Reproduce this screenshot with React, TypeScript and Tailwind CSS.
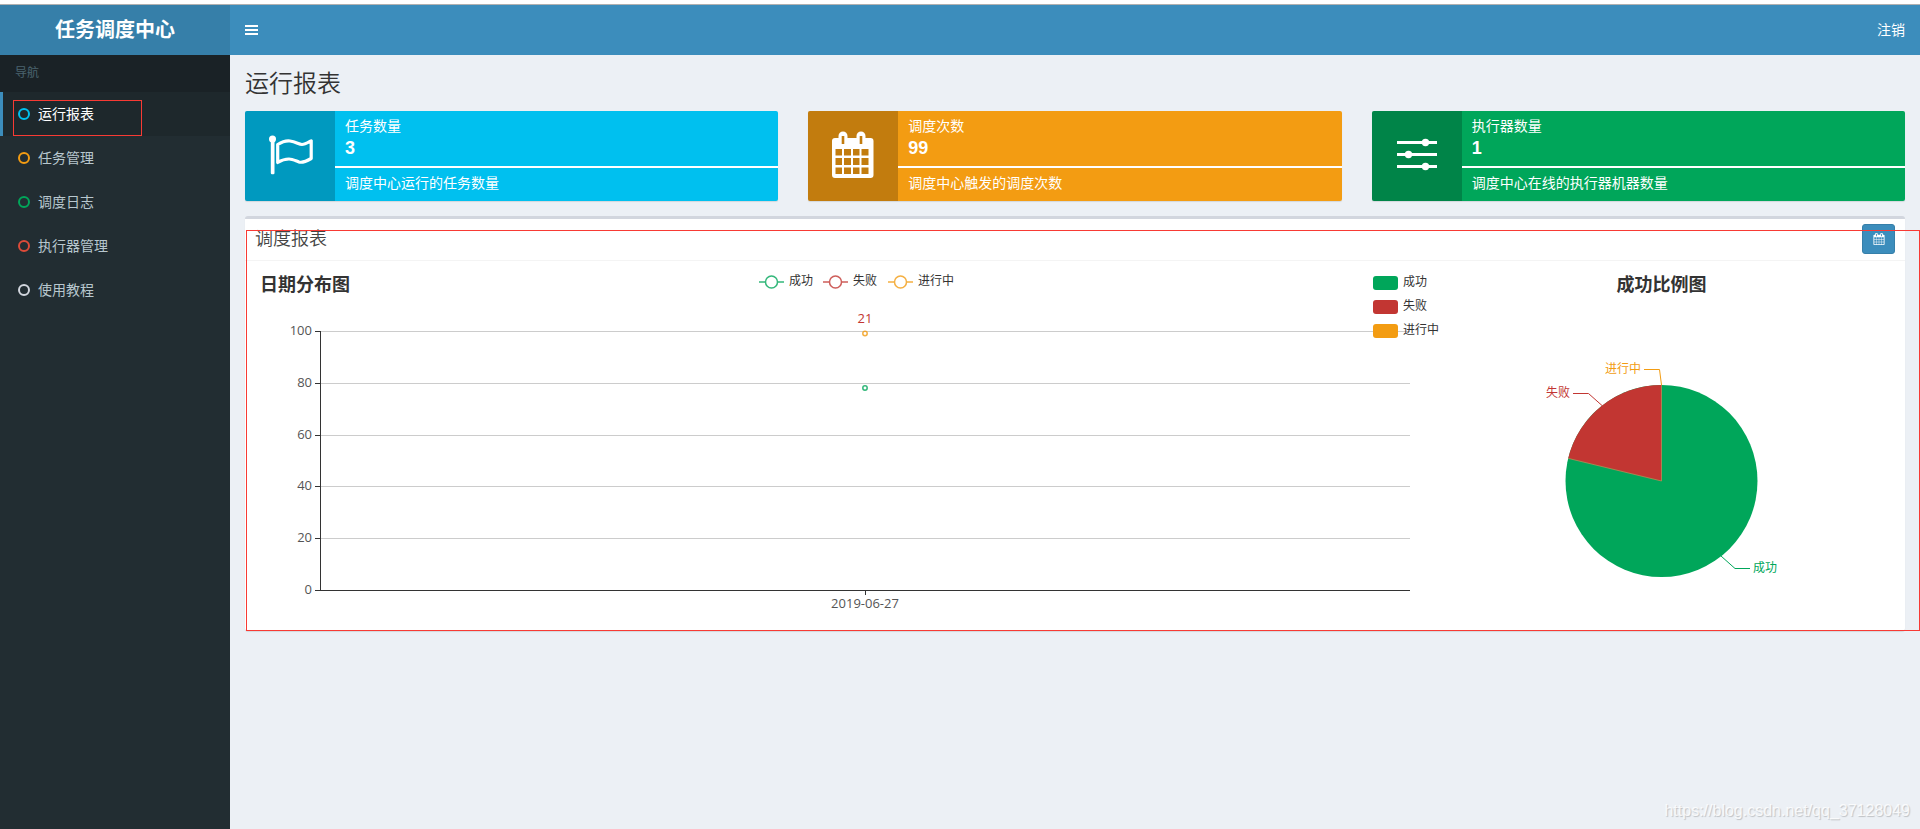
import clsx from 'clsx';
import type { ReactNode } from 'react';

const GREEN = '#00a65a';
const RED = '#c23632';
const ORANGE = '#f39c12';

const navItems = [
  { label: '运行报表', iconClass: 'border-[#00c0ef]', active: true },
  { label: '任务管理', iconClass: 'border-[#f39c12]' },
  { label: '调度日志', iconClass: 'border-[#00a65a]' },
  { label: '执行器管理', iconClass: 'border-[#dd4b39]' },
  { label: '使用教程', iconClass: 'border-[#d2d6de]' }
];

const series = [
  { name: '成功', color: GREEN },
  { name: '失败', color: RED },
  { name: '进行中', color: ORANGE }
];

function FlagIcon() {
  return (
    <svg viewBox="0 0 90 90" fill="none" className="size-[90px]">
      <circle cx="27.500" cy="28" r="3.500" fill="currentColor" />
      <path d="M25.800 28h3.700v34q0 1.200-1.200 1.200h-1.300q-1.200 0-1.200-1.200z" fill="currentColor" />
      <path
        d="M32.700 33.500C37 30.800 41 29.500 45 30C51 30.800 54 33.500 57 33.500C60 33.500 63 31.500 66.200 29.800V47.500C61 50.500 57 52 54 51C50 49.500 47 48 44 48C40 48 36 49.500 32.700 51.500Z"
        stroke="currentColor"
        strokeWidth="3.200"
        strokeLinejoin="round"
      />
    </svg>
  );
}

function CalendarIcon({ className }: { className: string }) {
  return (
    <svg viewBox="0 0 1792 1792" fill="currentColor" className={className}>
      <path d="M192 1664h288v-288h-288v288zm352 0h320v-288h-320v288zm-352-352h288v-320h-288v320zm352 0h320v-320h-320v320zm-352-384h288v-288h-288v288zm736 736h320v-288h-320v288zm-384-736h320v-288h-320v288zm768 736h288v-288h-288v288zm-384-352h320v-320h-320v320zm-352-864v-288q0-13-9.5-22.5t-22.5-9.5h-64q-13 0-22.5 9.5t-9.5 22.5v288q0 13 9.5 22.5t22.5 9.5h64q13 0 22.5-9.5t9.5-22.5zm736 864h288v-320h-288v320zm-384-384h320v-288h-320v288zm384 0h288v-288h-288v288zm32-480v-288q0-13-9.5-22.5t-22.5-9.5h-64q-13 0-22.5 9.5t-9.5 22.5v288q0 13 9.5 22.5t22.5 9.5h64q13 0 22.5-9.5t9.5-22.5zm384-64v1280q0 52-38 90t-90 38h-1408q-52 0-90-38t-38-90v-1280q0-52 38-90t90-38h128v-96q0-66 47-113t113-47h64q66 0 113 47t47 113v96h384v-96q0-66 47-113t113-47h64q66 0 113 47t47 113v96h128q52 0 90 38t38 90z" />
    </svg>
  );
}

// large calendar with a 4 x 3 day grid
function CalendarGridIcon() {
  return (
    <svg viewBox="0 0 90 90" fill="currentColor" className="size-[90px]">
      <path
        fillRule="evenodd"
        d="M27 27h3.500v-2a4.500 4.500 0 0 1 9 0v2h9v-2a4.500 4.500 0 0 1 9 0v2h5a3 3 0 0 1 3 3v34a3 3 0 0 1-3 3h-35.500a3 3 0 0 1-3-3v-34a3 3 0 0 1 3-3z
          M33.700 25h2.600v8h-2.600z M51.700 25h2.600v8h-2.600z
          M27.500 38h6.500v6.500h-6.500z M36 38h7v6.500h-7z M45 38h6.500v6.500h-6.500z M53.500 38h7v6.500h-7z
          M27.500 47h6.500v7h-6.500z M36 47h7v7h-7z M45 47h6.500v7h-6.500z M53.500 47h7v7h-7z
          M27.500 56.500h6.500v6.500h-6.500z M36 56.500h7v6.500h-7z M45 56.500h6.500v6.500h-6.500z M53.500 56.500h7v6.500h-7z"
      />
    </svg>
  );
}

function SettingsIcon() {
  return (
    <svg viewBox="0 0 90 90" fill="currentColor" className="size-[90px]">
      <path d="M25 30h40v3h-40zM25 42h40v3h-40zM25 54h40v3h-40z" />
      <circle cx="53.500" cy="31.500" r="3.700" />
      <circle cx="36.500" cy="43.500" r="3.700" />
      <circle cx="53.500" cy="55.500" r="3.700" />
    </svg>
  );
}

interface InfoBoxProps {
  title: string;
  value: number;
  description: string;
  bgClass: string;
  icon: ReactNode;
}

function InfoBox({ title, value, description, bgClass, icon }: InfoBoxProps) {
  return (
    <div
      className={clsx(
        'flex min-w-0 flex-1 overflow-hidden rounded-[2px] text-white shadow-[0_1px_1px_rgba(0,0,0,0.1)]',
        bgClass
      )}
    >
      <span className="flex h-[90px] w-[90px] shrink-0 items-center justify-center bg-black/20">
        {icon}
      </span>
      <div className="min-w-0 flex-1 pt-[5px]">
        <span className="block px-[10px] text-sm leading-5">{title}</span>
        <span className="block px-[10px] text-lg leading-[25px] font-bold">
          {value}
        </span>
        <div className="my-[5px] h-[2px] bg-white" />
        <span className="block px-[10px] text-sm leading-5">{description}</span>
      </div>
    </div>
  );
}

function LineChart() {
  const ticks = [100, 80, 60, 40, 20, 0];
  const legendX = [504, 568, 633];
  const yOf = (value: number) => Math.round(319 - value * 2.59) + 0.5;

  return (
    <svg
      viewBox="0 0 1113 350"
      className="block w-full overflow-visible font-['Open_Sans','Noto_Sans_CJK_SC',sans-serif] text-xs"
    >
      <text x="5" y="20" className="text-lg font-bold" fill="#333">
        日期分布图
      </text>

      {series.map(({ name, color }, idx) => (
        <g key={name}>
          <g stroke={color} strokeWidth="1.500" fill="#fff" opacity="0.8">
            <path d={`M${legendX[idx]} 11h25`} />
            <circle cx={legendX[idx] + 12.5} cy="11" r="6" />
          </g>
          <text x={legendX[idx] + 30} y="14" fill="#333">
            {name}
          </text>
        </g>
      ))}

      {ticks.map((tick) => (
        <g key={tick}>
          <path
            d={`M65 ${yOf(tick)}H1155`}
            stroke={tick === 0 ? '#333' : '#ccc'}
          />
          <path d={`M60 ${yOf(tick)}h5`} stroke="#333" />
          <text
            x="57"
            y={yOf(tick) + 3}
            textAnchor="end"
            className="text-[13px]"
            fill="#555"
          >
            {tick}
          </text>
        </g>
      ))}
      <path d="M65.500 60V320M610.500 320v4" stroke="#333" />
      <text
        x="610"
        y="337"
        textAnchor="middle"
        className="text-[13px]"
        fill="#555"
      >
        2019-06-27
      </text>

      <text
        x="610"
        y="52"
        textAnchor="middle"
        className="text-[13px]"
        fill={RED}
      >
        21
      </text>
      <g fill="#fff" strokeWidth="1.500" opacity="0.8">
        <circle cx="610" cy="62.500" r="2.200" stroke={ORANGE} />
        <circle cx="610" cy="117" r="2.200" stroke={GREEN} />
      </g>
    </svg>
  );
}

function PieChart() {
  const cx = 293.5;
  const cy = 210;
  const r = 96;
  // success takes 78 of 99 runs, clockwise from twelve o'clock
  const angle = (78 / 99) * 2 * Math.PI;
  const ex = cx + r * Math.sin(angle);
  const ey = cy - r * Math.cos(angle);

  return (
    <svg
      viewBox="0 0 527 350"
      className="relative block w-full overflow-visible font-['Open_Sans','Noto_Sans_CJK_SC',sans-serif] text-xs"
    >
      {series.map(({ name, color }, idx) => (
        <g key={name}>
          <rect
            x="5"
            y={5 + idx * 24}
            width="25"
            height="14"
            rx="3"
            fill={color}
          />
          <text x="35" y={15 + idx * 24} fill="#333">
            {name}
          </text>
        </g>
      ))}
      <text
        x={cx}
        y="20"
        textAnchor="middle"
        className="text-lg font-bold"
        fill="#333"
      >
        成功比例图
      </text>

      <circle cx={cx} cy={cy} r={r} fill={GREEN} />
      <path
        d={`M${cx} ${cy}L${ex} ${ey}A${r} ${r} 0 0 1 ${cx} ${cy - r}Z`}
        fill={RED}
      />
      <path
        d={`M${ex} ${ey}L${cx} ${cy}V${cy - r}`}
        fill="none"
        stroke="#b98a55"
        strokeWidth="0.800"
      />

      <g fill="none">
        <path d="M293.500 114L291.500 98.500H276" stroke={ORANGE} />
        <path d="M234 134.500L220.500 122.500H205" stroke={RED} />
        <path d="M353 285L367 297.500H382" stroke={GREEN} />
      </g>
      <text x="273" y="102" textAnchor="end" fill={ORANGE}>
        进行中
      </text>
      <text x="202" y="126" textAnchor="end" fill={RED}>
        失败
      </text>
      <text x="385" y="301" fill={GREEN}>
        成功
      </text>
    </svg>
  );
}

function Sidebar() {
  return (
    <aside className="w-[230px] shrink-0 bg-[#222d32]">
      <div className="bg-[#1a2226] px-[15px] py-[10px] text-xs leading-[17px] text-[#4b646f]">
        导航
      </div>
      <nav>
        <ul>
          {navItems.map(({ label, iconClass, active }) => (
            <li key={label} className="relative">
              <a
                href="#"
                className={clsx(
                  'flex h-11 items-center gap-2 border-l-3 pl-[15px] text-sm',
                  active
                    ? 'border-[#3c8dbc] bg-[#1e282c] text-white'
                    : 'border-transparent text-[#b8c7ce]'
                )}
              >
                <span
                  className={clsx('size-3 rounded-full border-2', iconClass)}
                />
                {label}
              </a>
              {active && (
                <div className="pointer-events-none absolute top-2 left-[13px] h-9 w-[129px] border border-[#f83a34]" />
              )}
            </li>
          ))}
        </ul>
      </nav>
    </aside>
  );
}

export default function App() {
  return (
    <div className="relative flex min-h-screen flex-col border-t-4 border-white bg-[#ecf0f5] font-['Liberation_Sans','Noto_Sans_CJK_SC',sans-serif] text-[#333]">
      <header className="flex h-[51px] border-t border-[#b0b0b0] bg-[#3c8dbc] text-white">
        <a
          href="#"
          className="flex w-[230px] shrink-0 items-center justify-center bg-[#367fa9] text-xl font-bold"
        >
          任务调度中心
        </a>
        <div className="flex flex-1 items-center justify-between px-[15px]">
          <button type="button" aria-label="切换导航">
            <svg viewBox="0 0 13 10" fill="currentColor" className="h-[10px] w-[13px]">
              <path d="M0 0h13v2H0zM0 4h13v2H0zM0 8h13v2H0z" />
            </svg>
          </button>
          <a href="#" className="text-sm">
            注销
          </a>
        </div>
      </header>

      <div className="flex flex-1">
        <Sidebar />

        <main className="min-w-0 flex-1 p-[15px]">
          <h1 className="text-2xl leading-7 font-[350]">运行报表</h1>

          <div className="mt-[13px] flex gap-[30px]">
            <InfoBox
              title="任务数量"
              value={3}
              description="调度中心运行的任务数量"
              bgClass="bg-[#00c0ef]"
              icon={<FlagIcon />}
            />
            <InfoBox
              title="调度次数"
              value={99}
              description="调度中心触发的调度次数"
              bgClass="bg-[#f39c12]"
              icon={<CalendarGridIcon />}
            />
            <InfoBox
              title="执行器数量"
              value={1}
              description="调度中心在线的执行器机器数量"
              bgClass="bg-[#00a65a]"
              icon={<SettingsIcon />}
            />
          </div>

          <section className="relative mt-[15px] rounded-[3px] border-t-3 border-[#d2d6de] bg-white shadow-[0_1px_1px_rgba(0,0,0,0.1)]">
            <div className="flex h-[42px] items-start justify-between border-b border-[#f4f4f4] px-[10px] pt-[5px]">
              <h3 className="text-lg leading-[30px] font-[350] text-[#444]">
                调度报表
              </h3>
              <button
                type="button"
                aria-label="选择日期"
                className="flex h-[30px] w-[33px] items-center justify-center rounded-[3px] border border-[#367fa9] bg-[#3c8dbc] text-white"
              >
                <CalendarIcon className="size-3" />
              </button>
            </div>
            <div className="flex p-[10px]">
              <div className="min-w-0 flex-[1113]">
                <LineChart />
              </div>
              <div className="min-w-0 flex-[527]">
                <PieChart />
              </div>
            </div>
            <div className="pointer-events-none absolute top-[11px] -right-[15px] bottom-0 left-px border border-[#f83a34]" />
          </section>
        </main>
      </div>

      <span className="absolute right-[10px] bottom-[6px] text-base text-white/80 [text-shadow:1px_1px_1px_rgba(0,0,0,0.2)]">
        https://blog.csdn.net/qq_37128049
      </span>
    </div>
  );
}
